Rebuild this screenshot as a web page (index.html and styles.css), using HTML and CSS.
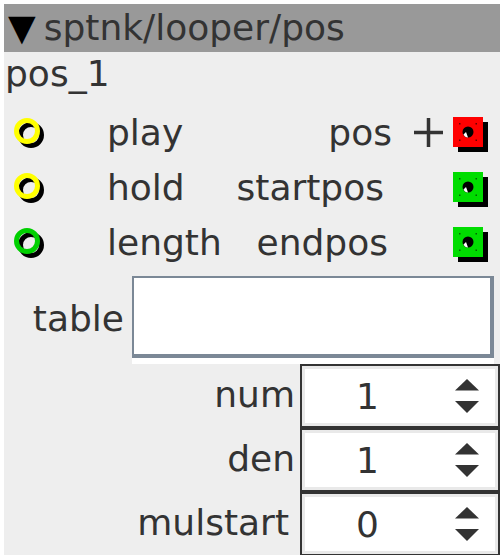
FILE: index.html
```html
<!DOCTYPE html>
<html lang="en">
<head>
    <meta charset="UTF-8">
    <meta name="viewport" content="width=device-width, initial-scale=1.0">
    <title>sptnk/looper/pos</title>
    <link rel="stylesheet" href="styles.css">
</head>
<body>
    <div class="panel">
        <div class="title"><span class="arrow">▼</span>sptnk/looper/pos</div>
        <div class="instance">pos_1</div>

        <div class="ports">
            <div class="port-row">
                <svg class="inlet" width="30" height="30" viewBox="0 0 30 30">
                    <circle cx="17" cy="17" r="10.5" fill="none" stroke="#000" stroke-width="5"/>
                    <circle cx="13" cy="13" r="10.5" fill="none" stroke="#ffff00" stroke-width="5"/>
                </svg>
                <span class="name-in">play</span>
                <span class="name-out out-pos">pos</span>
                <div class="plus-slot">
                    <svg width="29" height="29" viewBox="0 0 29 29">
                        <path d="M0 14.5 H29 M14.5 0 V29" stroke="#333" stroke-width="3.5"/>
                    </svg>
                </div>
                <svg class="outlet" width="35" height="35" viewBox="0 0 35 35">
                    <rect x="5" y="5" width="30" height="30" fill="#000"/>
                    <rect x="0" y="0" width="30" height="30" fill="#ff0000"/>
                    <g fill="#600">
                        <rect x="6" y="6" width="1.5" height="1.5"/><rect x="22.5" y="6" width="1.5" height="1.5"/>
                        <rect x="6" y="22.5" width="1.5" height="1.5"/><rect x="22.5" y="22.5" width="1.5" height="1.5"/>
                    </g>
                    <circle cx="15" cy="15" r="5.5" fill="#000"/>
                    <path d="M10.5 17.5 A5 5 0 0 0 15 20.5 L13 15 Z" fill="#fff"/>
                </svg>
            </div>
            <div class="port-row">
                <svg class="inlet" width="30" height="30" viewBox="0 0 30 30">
                    <circle cx="17" cy="17" r="10.5" fill="none" stroke="#000" stroke-width="5"/>
                    <circle cx="13" cy="13" r="10.5" fill="none" stroke="#ffff00" stroke-width="5"/>
                </svg>
                <span class="name-in">hold</span>
                <span class="name-out out-startpos">startpos</span>
                <div class="plus-slot"></div>
                <svg class="outlet" width="35" height="35" viewBox="0 0 35 35">
                    <rect x="5" y="5" width="30" height="30" fill="#000"/>
                    <rect x="0" y="0" width="30" height="30" fill="#00dd00"/>
                    <g fill="#060">
                        <rect x="6" y="6" width="1.5" height="1.5"/><rect x="22.5" y="6" width="1.5" height="1.5"/>
                        <rect x="6" y="22.5" width="1.5" height="1.5"/><rect x="22.5" y="22.5" width="1.5" height="1.5"/>
                    </g>
                    <circle cx="15" cy="15" r="5.5" fill="#000"/>
                    <path d="M10.5 17.5 A5 5 0 0 0 15 20.5 L13 15 Z" fill="#fff"/>
                </svg>
            </div>
            <div class="port-row">
                <svg class="inlet" width="30" height="30" viewBox="0 0 30 30">
                    <circle cx="17" cy="17" r="10.5" fill="none" stroke="#000" stroke-width="5"/>
                    <circle cx="13" cy="13" r="10.5" fill="none" stroke="#00d000" stroke-width="5"/>
                </svg>
                <span class="name-in">length</span>
                <span class="name-out">endpos</span>
                <div class="plus-slot"></div>
                <svg class="outlet" width="35" height="35" viewBox="0 0 35 35">
                    <rect x="5" y="5" width="30" height="30" fill="#000"/>
                    <rect x="0" y="0" width="30" height="30" fill="#00dd00"/>
                    <g fill="#060">
                        <rect x="6" y="6" width="1.5" height="1.5"/><rect x="22.5" y="6" width="1.5" height="1.5"/>
                        <rect x="6" y="22.5" width="1.5" height="1.5"/><rect x="22.5" y="22.5" width="1.5" height="1.5"/>
                    </g>
                    <circle cx="15" cy="15" r="5.5" fill="#000"/>
                    <path d="M10.5 17.5 A5 5 0 0 0 15 20.5 L13 15 Z" fill="#fff"/>
                </svg>
            </div>
        </div>

        <div class="table-row">
            <span class="table-label">table</span>
            <div class="table-box"></div>
        </div>

        <div class="spins">
            <div class="spin-row">
                <span class="spin-label">num</span>
                <div class="spin-box">
                    <span class="spin-value">1</span>
                    <svg class="spin-arrows" width="24" height="34" viewBox="0 0 24 34">
                        <polygon points="12,0 24,11.5 0,11.5" fill="#333"/>
                        <polygon points="0,22 24,22 12,34" fill="#333"/>
                    </svg>
                </div>
            </div>
            <div class="spin-row">
                <span class="spin-label">den</span>
                <div class="spin-box">
                    <span class="spin-value">1</span>
                    <svg class="spin-arrows" width="24" height="34" viewBox="0 0 24 34">
                        <polygon points="12,0 24,11.5 0,11.5" fill="#333"/>
                        <polygon points="0,22 24,22 12,34" fill="#333"/>
                    </svg>
                </div>
            </div>
            <div class="spin-row">
                <span class="spin-label spin-label-long">mulstart</span>
                <div class="spin-box">
                    <span class="spin-value">0</span>
                    <svg class="spin-arrows" width="24" height="34" viewBox="0 0 24 34">
                        <polygon points="12,0 24,11.5 0,11.5" fill="#333"/>
                        <polygon points="0,22 24,22 12,34" fill="#333"/>
                    </svg>
                </div>
            </div>
        </div>
    </div>
</body>
</html>
```

FILE: styles.css
```css
* {
    box-sizing: border-box;
}

body {
    margin: 0;
    background: #fff;
    font-family: "DejaVu Sans", sans-serif;
    font-size: 36px;
    color: #333;
}

.panel {
    margin: 4px;
    width: 496px;
    height: 551px;
    background: #eee;
    overflow: hidden;
}

.title {
    height: 48px;
    line-height: 48px;
    background: #999;
    padding-left: 4px;
    white-space: nowrap;
}

.arrow {
    color: #000;
    margin-right: 8px;
}

.instance {
    height: 43px;
    line-height: 43px;
    padding-left: 1px;
}

.ports {
    padding-top: 10px;
}

.port-row {
    display: flex;
    align-items: center;
    height: 55px;
    padding-right: 12px;
}

.inlet {
    margin-left: 10px;
    flex: none;
}

.name-in {
    margin-left: 63px;
    flex: 1;
}

.name-out {
    text-align: right;
}

.out-pos {
    margin-right: -4px;
}

.out-startpos {
    margin-right: 4px;
}

.plus-slot {
    width: 65px;
    height: 29px;
    padding-left: 26px;
    display: flex;
    align-items: center;
}

.outlet {
    flex: none;
    margin-top: 4px;
}

.table-row {
    display: flex;
    align-items: center;
    margin-top: 6px;
}

.table-label {
    width: 120px;
    text-align: right;
    margin-right: 8px;
    padding-top: 3px;
}

.table-box {
    width: 362px;
    height: 82px;
    background: #fff;
    border-style: solid;
    border-color: #7b8896;
    border-width: 2px 4px 4px 2px;
    box-shadow: 0 6px 0 #fff;
}

.spins {
    margin-top: 6px;
}

.spin-row {
    display: flex;
    align-items: center;
}

.spin-label {
    width: 291px;
    text-align: right;
    margin-right: 5px;
    padding-bottom: 3px;
}

.spin-label-long {
    padding-right: 6px;
}

.spin-box {
    width: 200px;
    height: 64px;
    display: flex;
    align-items: center;
    background: #fff;
    border: 2px solid #333;
    box-shadow: inset 0 0 0 3px #e9e9e9;
}

.spin-value {
    width: 131px;
    text-align: center;
}

.spin-arrows {
    margin-left: 22px;
}
```
